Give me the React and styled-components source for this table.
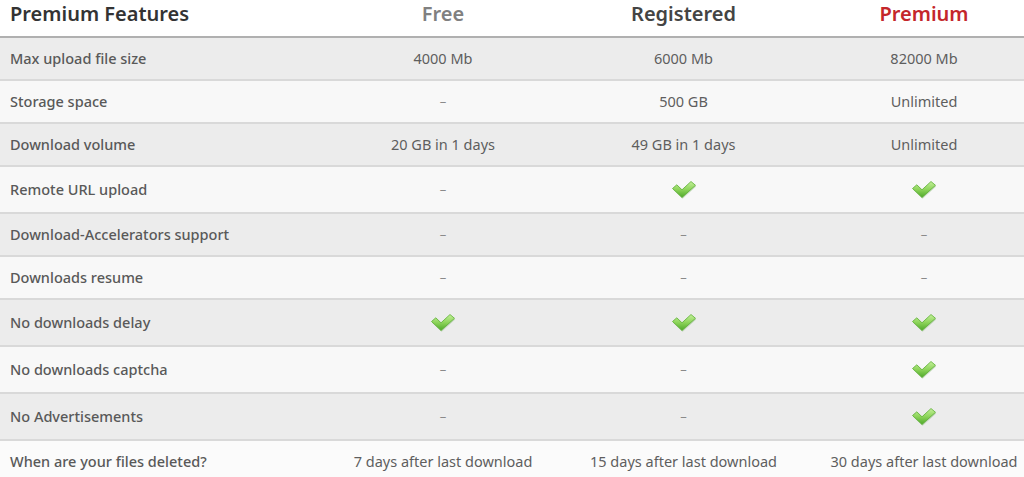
import React from 'react';
import styled, { createGlobalStyle } from 'styled-components';

const GlobalStyle = createGlobalStyle`
    body {
        margin: 0;
        background: #ffffff;
        overflow: hidden;
        font-family: "Noto Sans", "Liberation Sans", Arial, sans-serif;
    }
`;

const plans = [
    { name: 'Free', color: '#808080' },
    { name: 'Registered', color: '#444444' },
    { name: 'Premium', color: '#c4262b' },
];

// 'x' = check mark, '-' = dash, anything else is plain text
const rows = [
    ['Max upload file size', '4000 Mb', '6000 Mb', '82000 Mb'],
    ['Storage space', '-', '500 GB', 'Unlimited'],
    ['Download volume', '20 GB in 1 days', '49 GB in 1 days', 'Unlimited'],
    ['Remote URL upload', '-', 'x', 'x'],
    ['Download-Accelerators support', '-', '-', '-'],
    ['Downloads resume', '-', '-', '-'],
    ['No downloads delay', 'x', 'x', 'x'],
    ['No downloads captcha', '-', '-', 'x'],
    ['No Advertisements', '-', '-', 'x'],
    ['When are your files deleted?', '7 days after last download', '15 days after last download', '30 days after last download'],
];

const Check = () => (
    <svg width="26" height="21" viewBox="0 0 26 21">
        <defs>
            <linearGradient id="chk" x1="0" y1="0" x2="0" y2="1">
                <stop offset="0" stopColor="#c4f09a" />
                <stop offset="0.5" stopColor="#8dd45a" />
                <stop offset="1" stopColor="#4fa82a" />
            </linearGradient>
        </defs>
        <path d="M1.5 9.5 L5.8 5.8 L11 10.8 L20 2.5 L24.5 6.3 L11 18.5 Z" fill="#3d8a1e" opacity="0.25" transform="translate(0.6 1.2)" />
        <path d="M1.5 9.5 L5.8 5.8 L11 10.8 L20 2.5 L24.5 6.3 L11 18.5 Z" fill="url(#chk)" stroke="#5cae33" strokeWidth="0.8" strokeLinejoin="round" />
    </svg>
);

const Cell = ({ value }) => {
    if (value === 'x') return <Check />;
    if (value === '-') return <Dash>–</Dash>;
    return value;
};

const App = () => (
    <>
        <GlobalStyle />
        <Table>
            <HeaderRow>
                <HeaderTitle>Premium Features</HeaderTitle>
                {plans.map((p) => (
                    <PlanName key={p.name} color={p.color}>{p.name}</PlanName>
                ))}
            </HeaderRow>
            {rows.map((r, i) => {
                const tall = r.includes('x');
                return (
                    <Row key={r[0]} $shade={i % 2 === 0} $last={i === rows.length - 1}>
                        <Label $tall={tall}>{r[0]}</Label>
                        {r.slice(1).map((v, j) => (
                            <Value key={j} $tall={tall}><Cell value={v} /></Value>
                        ))}
                    </Row>
                );
            })}
        </Table>
    </>
);

const Table = styled.div`
    width: 1044px;
    display: flex;
    flex-direction: column;
`;

const cols = `323px 240px 241px 240px`;

const HeaderRow = styled.div`
    display: grid;
    grid-template-columns: ${cols};
    align-items: center;
    height: 25px;
    padding-bottom: 11px;
    border-bottom: 2px solid #b0b0b0;
    background: #ffffff;
`;

const HeaderTitle = styled.div`
    padding-left: 10px;
    font-size: 20px;
    font-weight: 600;
    color: #333333;
`;

const PlanName = styled.div`
    text-align: center;
    font-size: 20px;
    font-weight: 600;
    color: ${(p) => p.color};
`;

const Row = styled.div`
    display: grid;
    grid-template-columns: ${cols};
    background: ${(p) => (p.$last ? '#fbfbfb' : p.$shade ? '#ececec' : '#f8f8f8')};
    border-bottom: ${(p) => (p.$last ? 'none' : '2px solid #d9d9d9')};
`;

const Label = styled.div`
    display: flex;
    align-items: center;
    box-sizing: border-box;
    padding: 0 0 1px 10px;
    height: ${(p) => (p.$tall ? '45px' : '41px')};
    font-size: 14.5px;
    font-weight: 500;
    color: #595959;
`;

const Value = styled.div`
    display: flex;
    align-items: center;
    justify-content: center;
    box-sizing: border-box;
    padding-bottom: 1px;
    height: ${(p) => (p.$tall ? '45px' : '41px')};
    font-size: 14.5px;
    color: #5e5e5e;
`;

const Dash = styled.span`
    color: #8a8a8a;
    font-size: 13px;
`;

export default App;
